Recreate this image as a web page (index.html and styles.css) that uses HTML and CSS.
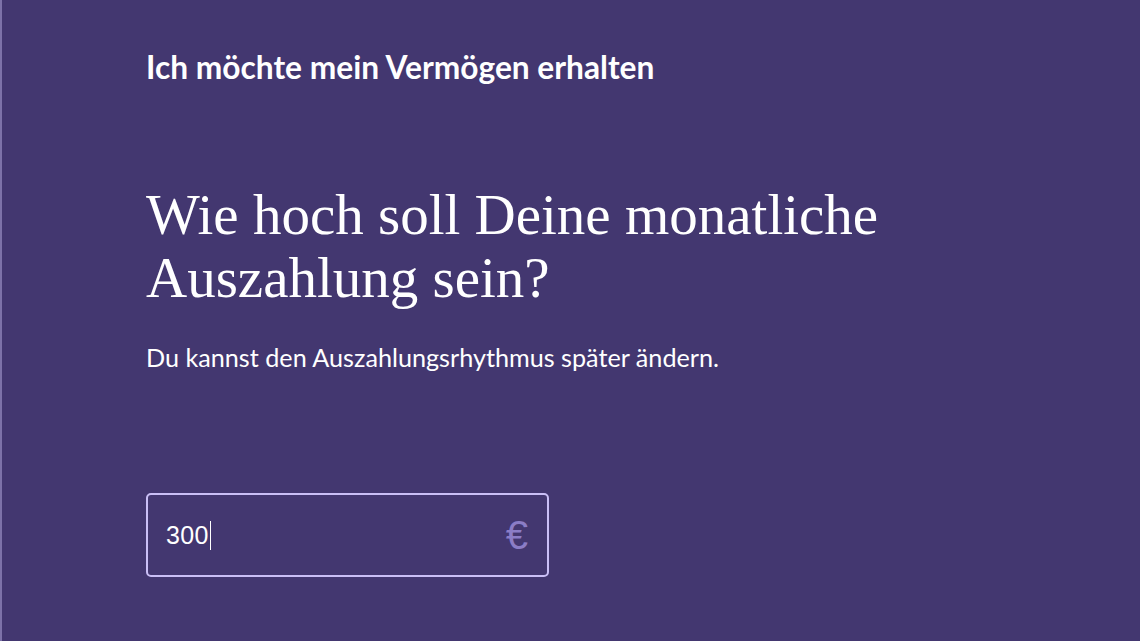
FILE: index.html
```html
<!DOCTYPE html>
<html lang="de">
<head>
<meta charset="utf-8">
<link rel="stylesheet" href="styles.css">
</head>
<body>
<main class="page">
  <h2 class="eyebrow">Ich möchte mein Vermögen erhalten</h2>
  <h1 class="question">Wie hoch soll Deine monatliche<br>Auszahlung sein?</h1>
  <p class="hint">Du kannst den Auszahlungsrhythmus später ändern.</p>
  <div class="field">
    <span class="value">300</span><span class="caret"></span>
    <span class="unit">€</span>
  </div>
</main>
</body>
</html>
```

FILE: styles.css
```css
html, body {
  margin: 0;
  height: 100%;
}
body {
  background: #433770;
  color: #ffffff;
  font-family: Lato, "Noto Sans", sans-serif;
  border-left: 2px solid #7d72a8;
  box-sizing: border-box;
}
.page {
  padding: 48px 0 0 144px;
  display: flex;
  flex-direction: column;
  align-items: flex-start;
}
.eyebrow {
  margin: 0;
  font-size: 31.7px;
  font-weight: 700;
  line-height: 38px;
}
.question {
  margin: 97px 0 0 0;
  font-family: "Liberation Serif", "DejaVu Serif", serif;
  font-weight: 400;
  font-size: 57px;
  line-height: 63px;
}
.hint {
  margin: 33px 0 0 0;
  font-size: 25.2px;
  line-height: 30px;
}
.field {
  margin-top: 121px;
  width: 399px;
  height: 80px;
  border: 2px solid #cabff6;
  border-radius: 5px;
  display: flex;
  align-items: center;
}
.value {
  margin-left: 18px;
  font-family: "Liberation Sans", Arial, sans-serif;
  font-size: 25px;
  letter-spacing: 0.4px;
}
.caret {
  width: 1px;
  height: 29px;
  background: #ffffff;
  margin-left: 1px;
}
.unit {
  margin-left: auto;
  margin-right: 19px;
  font-family: "Liberation Sans", Arial, sans-serif;
  font-size: 40px;
  color: #8b7dc6;
}
```
